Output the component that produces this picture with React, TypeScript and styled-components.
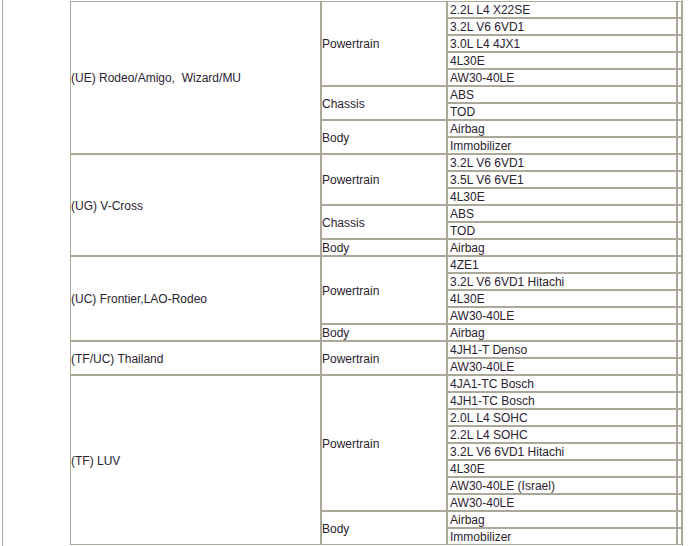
import React from "react";
import styled, { createGlobalStyle } from "styled-components";

const GlobalStyle = createGlobalStyle`
  html, body {
    margin: 0;
    padding: 0;
    background: #ffffff;
    overflow: hidden;
  }
  body {
    font-family: "Liberation Sans", Arial, sans-serif;
  }
`;

const Frame = styled.div`
  margin-left: 2px;
  width: 681px;
  height: 546px;
  border-left: 1px solid #aca899;
  border-right: 1px solid #aca899;
  box-sizing: border-box;
  padding: 1px 0 0 67px;
`;

const Table = styled.table`
  border-collapse: separate;
  border-spacing: 0;
  table-layout: fixed;
  width: 612px;
  font-family: "Liberation Sans", Arial, sans-serif;
  font-size: 12px;
  color: #2a2230;
`;

const Col = styled.col<{ $w: number }>`
  width: ${(p) => p.$w}px;
`;

const Cell = styled.td`
  border: 1px solid #aca899;
  padding: 2px 0 0 0;
  height: 13px;
  line-height: 13px;
  vertical-align: middle;
  white-space: nowrap;
  overflow: hidden;
`;

const ValueCell = styled(Cell)`
  padding-left: 2px;
`;

const SpacerCell = styled(Cell)`
  padding-left: 0;
`;

type SystemGroup = { name: string; items: string[] };
type Model = { name: string; systems: SystemGroup[] };

const models: Model[] = [
  {
    name: "(UE) Rodeo/Amigo,\u00a0 Wizard/MU",
    systems: [
      { name: "Powertrain", items: ["2.2L L4 X22SE", "3.2L V6 6VD1", "3.0L L4 4JX1", "4L30E", "AW30-40LE"] },
      { name: "Chassis", items: ["ABS", "TOD"] },
      { name: "Body", items: ["Airbag", "Immobilizer"] },
    ],
  },
  {
    name: "(UG) V-Cross",
    systems: [
      { name: "Powertrain", items: ["3.2L V6 6VD1", "3.5L V6 6VE1", "4L30E"] },
      { name: "Chassis", items: ["ABS", "TOD"] },
      { name: "Body", items: ["Airbag"] },
    ],
  },
  {
    name: "(UC) Frontier,LAO-Rodeo",
    systems: [
      { name: "Powertrain", items: ["4ZE1", "3.2L V6 6VD1 Hitachi", "4L30E", "AW30-40LE"] },
      { name: "Body", items: ["Airbag"] },
    ],
  },
  {
    name: "(TF/UC) Thailand",
    systems: [{ name: "Powertrain", items: ["4JH1-T Denso", "AW30-40LE"] }],
  },
  {
    name: "(TF) LUV",
    systems: [
      {
        name: "Powertrain",
        items: [
          "4JA1-TC Bosch",
          "4JH1-TC Bosch",
          "2.0L L4 SOHC",
          "2.2L L4 SOHC",
          "3.2L V6 6VD1 Hitachi",
          "4L30E",
          "AW30-40LE (Israel)",
          "AW30-40LE",
        ],
      },
      { name: "Body", items: ["Airbag", "Immobilizer"] },
    ],
  },
];

export default function App() {
  const rows: React.ReactNode[] = [];
  models.forEach((m, mi) => {
    const total = m.systems.reduce((a, s) => a + s.items.length, 0);
    let first = true;
    m.systems.forEach((s, si) => {
      s.items.forEach((item, ii) => {
        rows.push(
          <tr key={`${mi}-${si}-${ii}`}>
            {first && <Cell rowSpan={total}>{m.name}</Cell>}
            {ii === 0 && <Cell rowSpan={s.items.length}>{s.name}</Cell>}
            <ValueCell>{item}</ValueCell>
            <SpacerCell />
          </tr>
        );
        first = false;
      });
    });
  });

  return (
    <>
      <GlobalStyle />
      <Frame>
        <Table>
          <colgroup>
            <Col $w={251} />
            <Col $w={126} />
            <Col $w={230} />
            <Col $w={5} />
          </colgroup>
          <tbody>{rows}</tbody>
        </Table>
      </Frame>
    </>
  );
}
